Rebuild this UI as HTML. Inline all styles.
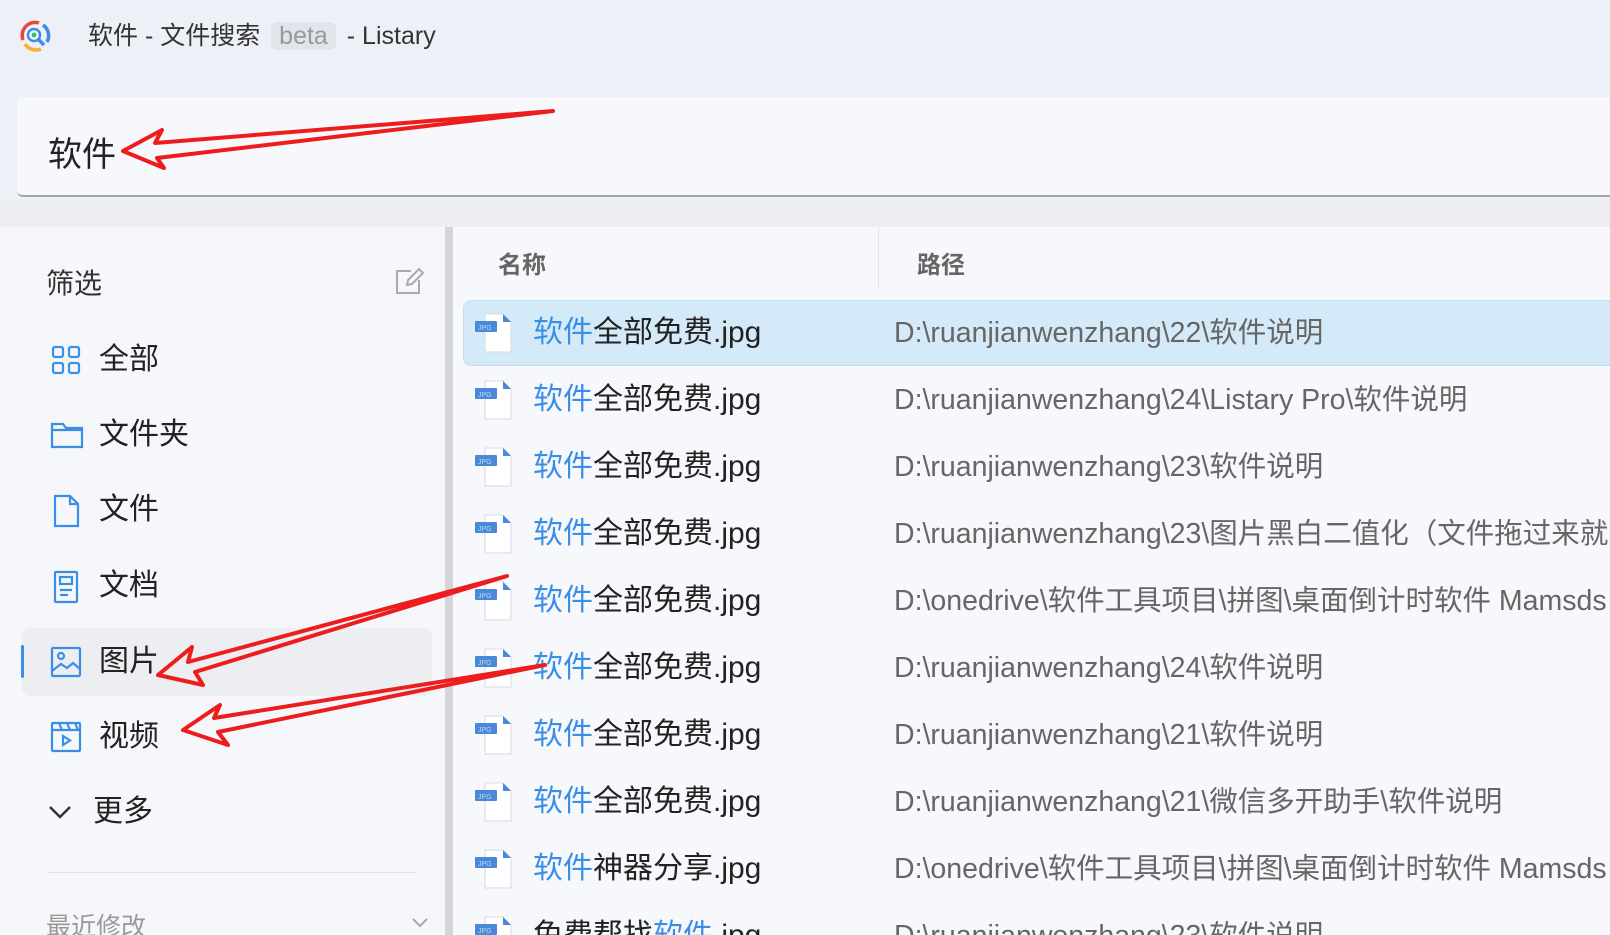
<!DOCTYPE html>
<html style="width:1610px;height:935px;overflow:hidden"><head><meta charset="utf-8"><style>
*{margin:0;padding:0;box-sizing:border-box}
body{width:1610px;height:935px;overflow:hidden;background:#eef0f7;font-family:"Liberation Sans","Noto Sans CJK SC",sans-serif;position:relative;color:#222}
.abs{position:absolute}
.title{left:88px;top:18px;font-size:25px;color:#333;white-space:nowrap;line-height:36px}
.beta{background:#e1e4eb;color:#999;border-radius:6px;padding:0 8px;margin:0 4px}
.search{left:17px;top:97px;width:1600px;height:100px;background:#f7f8fc;border-radius:6px 0 0 6px;border-bottom:2px solid #a3a6ad}
.strip{left:0;top:199px;width:1610px;height:28px;background:#eceef3}
.side{left:0;top:227px;width:445px;height:708px;background:#f6f7fb;overflow:hidden}
.divbar{left:445px;top:227px;width:8px;height:708px;background:#d3d5d9}
.main{left:453px;top:227px;width:1157px;height:708px;background:#f7f8fc}
.item{position:absolute;left:0;width:445px;height:40px;font-size:30px;line-height:40px}
.item span{position:absolute;left:99px}
.item svg{position:absolute;left:50px;top:4px}
.row{position:absolute;left:10px;width:1160px;height:66px}
.row .n{position:absolute;left:70px;top:0;line-height:66px;font-size:30px;color:#222;white-space:nowrap}
.row .p{position:absolute;left:431px;top:0;line-height:66px;font-size:28.5px;color:#666;white-space:nowrap}
.b{color:#3a8ee6}
</style></head><body>
<svg class="abs" style="left:17px;top:18px" width="36" height="36" viewBox="0 0 36 36">
<path d="M6 22 A13 13 0 0 1 22 5" stroke="#e8483c" stroke-width="3.5" fill="none"/>
<path d="M26 7 A13 13 0 0 1 30 24" stroke="#3a8ee6" stroke-width="3.5" fill="none"/>
<path d="M8 26 A13 13 0 0 0 24 31" stroke="#f2b234" stroke-width="3.5" fill="none"/>
<circle cx="17" cy="17" r="6" fill="#fff" stroke="#3a8ee6" stroke-width="2.5"/>
<circle cx="17" cy="17" r="2.5" fill="#3cb878"/>
<path d="M21 21 L27 27" stroke="#3a8ee6" stroke-width="3.5"/>
</svg>
<div class="abs title">软件 - 文件搜索 <span class="beta">beta</span> - Listary</div>
<div class="abs search"><div class="abs" style="left:31px;top:30px;font-size:34px;color:#222">软件</div></div>
<div class="abs strip"></div>
<div class="abs side">
 <div class="abs" style="left:46px;top:35px;font-size:28px;color:#333">筛选</div>
 <svg class="abs" style="left:395px;top:40px" width="30" height="28" viewBox="0 0 30 28" fill="none" stroke="#aaa" stroke-width="2"><path d="M16 4H2v22h22V13"/><path d="M12 18l1-5 11-11 4 4-11 11z"/></svg>
 <div class="item" style="top:113px"><svg width="32" height="32" viewBox="0 0 32 32" fill="none" stroke="#3a8ee6" stroke-width="2.2"><rect x="3" y="3" width="10" height="10" rx="2"/><rect x="19" y="3" width="10" height="10" rx="2"/><rect x="3" y="19" width="10" height="10" rx="2"/><rect x="19" y="19" width="10" height="10" rx="2"/></svg><span>全部</span></div>
 <div class="item" style="top:188px"><svg width="34" height="32" viewBox="0 0 34 32" fill="none" stroke="#3a8ee6" stroke-width="2.2"><path d="M2 5h11l3 4h16v19H2z"/><path d="M2 11h30"/></svg><span>文件夹</span></div>
 <div class="item" style="top:263px"><svg width="32" height="34" viewBox="0 0 32 34" fill="none" stroke="#3a8ee6" stroke-width="2.2"><path d="M5 2h15l8 8v22H5z"/><path d="M20 2v8h8"/></svg><span>文件</span></div>
 <div class="item" style="top:339px"><svg width="32" height="34" viewBox="0 0 32 34" fill="none" stroke="#3a8ee6" stroke-width="2.2"><rect x="5" y="2" width="22" height="30" rx="1"/><rect x="10" y="7" width="12" height="7"/><path d="M10 20h12M10 25h8"/></svg><span>文档</span></div>
 <div class="abs" style="left:22px;top:401px;width:410px;height:68px;background:#eceef2;border-radius:8px"></div>
 <div class="abs" style="left:21px;top:418px;width:3px;height:33px;background:#3a8ee6;border-radius:2px"></div>
 <div class="item" style="top:415px"><svg width="32" height="32" viewBox="0 0 32 32" fill="none" stroke="#3a8ee6" stroke-width="2.2"><rect x="2" y="2" width="28" height="28" rx="1"/><circle cx="11" cy="10" r="3"/><path d="M2 25l9-7 6 4 6-5 7 6"/></svg><span>图片</span></div>
 <div class="item" style="top:490px"><svg width="32" height="32" viewBox="0 0 32 32" fill="none" stroke="#3a8ee6" stroke-width="2.2"><rect x="2" y="2" width="28" height="28" rx="1"/><path d="M2 9h28M9 2l3 7M17 2l3 7M25 2l3 7"/><path d="M13 15v9l7-4.5z"/></svg><span>视频</span></div>
 <div class="item" style="top:565px"><svg width="24" height="32" viewBox="0 0 24 32" style="left:48px" fill="none" stroke="#333" stroke-width="2.5"><path d="M2 11l10 10 10-10"/></svg><span style="left:93px">更多</span></div>
 <div class="abs" style="left:48px;top:645px;width:368px;height:1px;background:#e2e4e8"></div>
 <div class="abs" style="left:46px;top:680px;font-size:25px;color:#999">最近修改</div>
 <svg class="abs" style="left:411px;top:690px" width="18" height="12" viewBox="0 0 18 12" fill="none" stroke="#aaa" stroke-width="2"><path d="M2 2l7 7 7-7"/></svg>
</div>
<div class="abs divbar"></div>
<div class="abs main" style="overflow:hidden">
 <div class="abs" style="left:45px;top:18px;font-size:24px;font-weight:bold;color:#666">名称</div>
 <div class="abs" style="left:425px;top:0;width:1px;height:62px;background:#e4e6ea"></div>
 <div class="abs" style="left:464px;top:18px;font-size:24px;font-weight:bold;color:#666">路径</div>
 <div class="abs" style="left:10px;top:73px;width:1160px;height:66px;background:#d5eaf9;border-radius:8px;border:1px solid #c3dff4"></div>
 <div id="rows"></div>
</div>
<svg class="abs" style="left:0;top:0" width="1610" height="935" fill="none" stroke="#ee1d1d" stroke-width="4" stroke-linejoin="round">
<polygon points="123,151 162,130 155,143 553,111 157,158 164,168"/>
<polygon points="158,675 192,647 188,662 507,576 195,672 203,685"/>
<polygon points="183,730 220,705 214,718 545,665 218,732 228,745"/>
</svg>
<script>
var d=[["软件","全部免费.jpg","D:\\ruanjianwenzhang\\22\\软件说明"],["软件","全部免费.jpg","D:\\ruanjianwenzhang\\24\\Listary Pro\\软件说明"],["软件","全部免费.jpg","D:\\ruanjianwenzhang\\23\\软件说明"],["软件","全部免费.jpg","D:\\ruanjianwenzhang\\23\\图片黑白二值化（文件拖过来就"],["软件","全部免费.jpg","D:\\onedrive\\软件工具项目\\拼图\\桌面倒计时软件 Mamsds"],["软件","全部免费.jpg","D:\\ruanjianwenzhang\\24\\软件说明"],["软件","全部免费.jpg","D:\\ruanjianwenzhang\\21\\软件说明"],["软件","全部免费.jpg","D:\\ruanjianwenzhang\\21\\微信多开助手\\软件说明"],["软件","神器分享.jpg","D:\\onedrive\\软件工具项目\\拼图\\桌面倒计时软件 Mamsds"],["","","D:\\ruanjianwenzhang\\23\\软件说明"]];
var h="";
for(var i=0;i<d.length;i++){var t=73+i*67;
var ic='<svg class="abs" style="left:12px;top:13px" width="40" height="40" viewBox="0 0 40 40"><path d="M10 1h18l8 8v30H10z" fill="#fff" stroke="#d4dae3"/><path d="M28 1l8 8h-8z" fill="#4a88d8"/><rect x="0" y="8" width="22" height="11" rx="1" fill="#4a88d8"/><text x="3" y="17" font-size="7" fill="#bcd6f5" font-family="Liberation Sans">JPG</text></svg>';
var n=i==9?'免费帮找<span class="b">软件</span>.jpg':'<span class="b">'+d[i][0]+'</span>'+d[i][1];
h+='<div class="row" style="top:'+t+'px">'+ic+'<div class="n">'+n+'</div><div class="p">'+d[i][2]+'</div></div>';}
document.getElementById("rows").innerHTML=h;
</script>
</body></html>
